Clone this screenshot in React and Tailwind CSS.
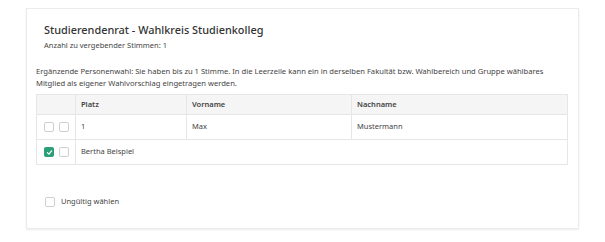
import React from 'react';

function Box({ checked = false }) {
  if (checked) {
    return (
      <span className="inline-flex w-[10px] h-[10px] rounded-[2px] bg-[#2b9f78] items-center justify-center">
        <svg width="7" height="7" viewBox="0 0 10 10">
          <path d="M2 5.2 L4.2 7.3 L8 2.8" fill="none" stroke="#fff" strokeWidth="1.8" strokeLinecap="round" strokeLinejoin="round" />
        </svg>
      </span>
    );
  }
  return <span className="inline-block w-[10px] h-[10px] rounded-[2px] border border-[#cfcfcf] bg-white" />;
}

export default function App() {
  return (
    <div className="w-full h-[242px] bg-white pt-2 pl-[26px] text-[#444]" style={{ fontFamily: '"Noto Sans", "Open Sans", sans-serif' }}>
      <div className="w-[553px] h-[221px] border border-[#ebebeb] shadow-[0_1px_2px_rgba(0,0,0,0.08)] px-[9px]">
        <div className="pl-[8px] pt-[14px]">
          <div className="text-[10.9px] leading-[14px] font-medium text-[#333]">Studierendenrat - Wahlkreis Studienkolleg</div>
          <div className="mt-[3px] text-[7.5px] leading-[10px] text-[#444]">Anzahl zu vergebender Stimmen: 1</div>
        </div>
        <p className="mt-[15px] text-[7.6px] leading-[12px] text-[#444]">
          Ergänzende Personenwahl: Sie haben bis zu 1 Stimme. In die Leerzeile kann ein in derselben Fakultät bzw. Wahlbereich und Gruppe wählbares Mitglied als eigener Wahlvorschlag eingetragen werden.
        </p>
        <table className="mt-[5px] w-[532px] border-collapse text-[7.5px] text-[#444]">
          <thead>
            <tr className="h-[20px] bg-[#f5f5f5]">
              <th className="w-[39px] border border-[#e6e6e6]"></th>
              <th className="w-[111px] border border-[#e6e6e6] text-left font-semibold pl-[5px]">Platz</th>
              <th className="w-[165px] border border-[#e6e6e6] text-left font-semibold pl-[5px]">Vorname</th>
              <th className="border border-[#e6e6e6] text-left font-semibold pl-[5px]">Nachname</th>
            </tr>
          </thead>
          <tbody>
            <tr className="h-[25px]">
              <td className="border border-[#e6e6e6]">
                <div className="flex gap-[5px] pl-[7px]"><Box /><Box /></div>
              </td>
              <td className="border border-[#e6e6e6] pl-[5px]">1</td>
              <td className="border border-[#e6e6e6] pl-[5px]">Max</td>
              <td className="border border-[#e6e6e6] pl-[5px]">Mustermann</td>
            </tr>
            <tr className="h-[25px]">
              <td className="border border-[#e6e6e6]">
                <div className="flex gap-[5px] pl-[7px]"><Box checked /><Box /></div>
              </td>
              <td colSpan={3} className="border border-[#e6e6e6] pl-[5px]">Bertha Beispiel</td>
            </tr>
          </tbody>
        </table>
        <div className="mt-[31px] flex items-center gap-[6px] pl-[9px] h-[12px]">
          <Box />
          <span className="text-[7.5px] text-[#444]">Ungültig wählen</span>
        </div>
      </div>
    </div>
  );
}
